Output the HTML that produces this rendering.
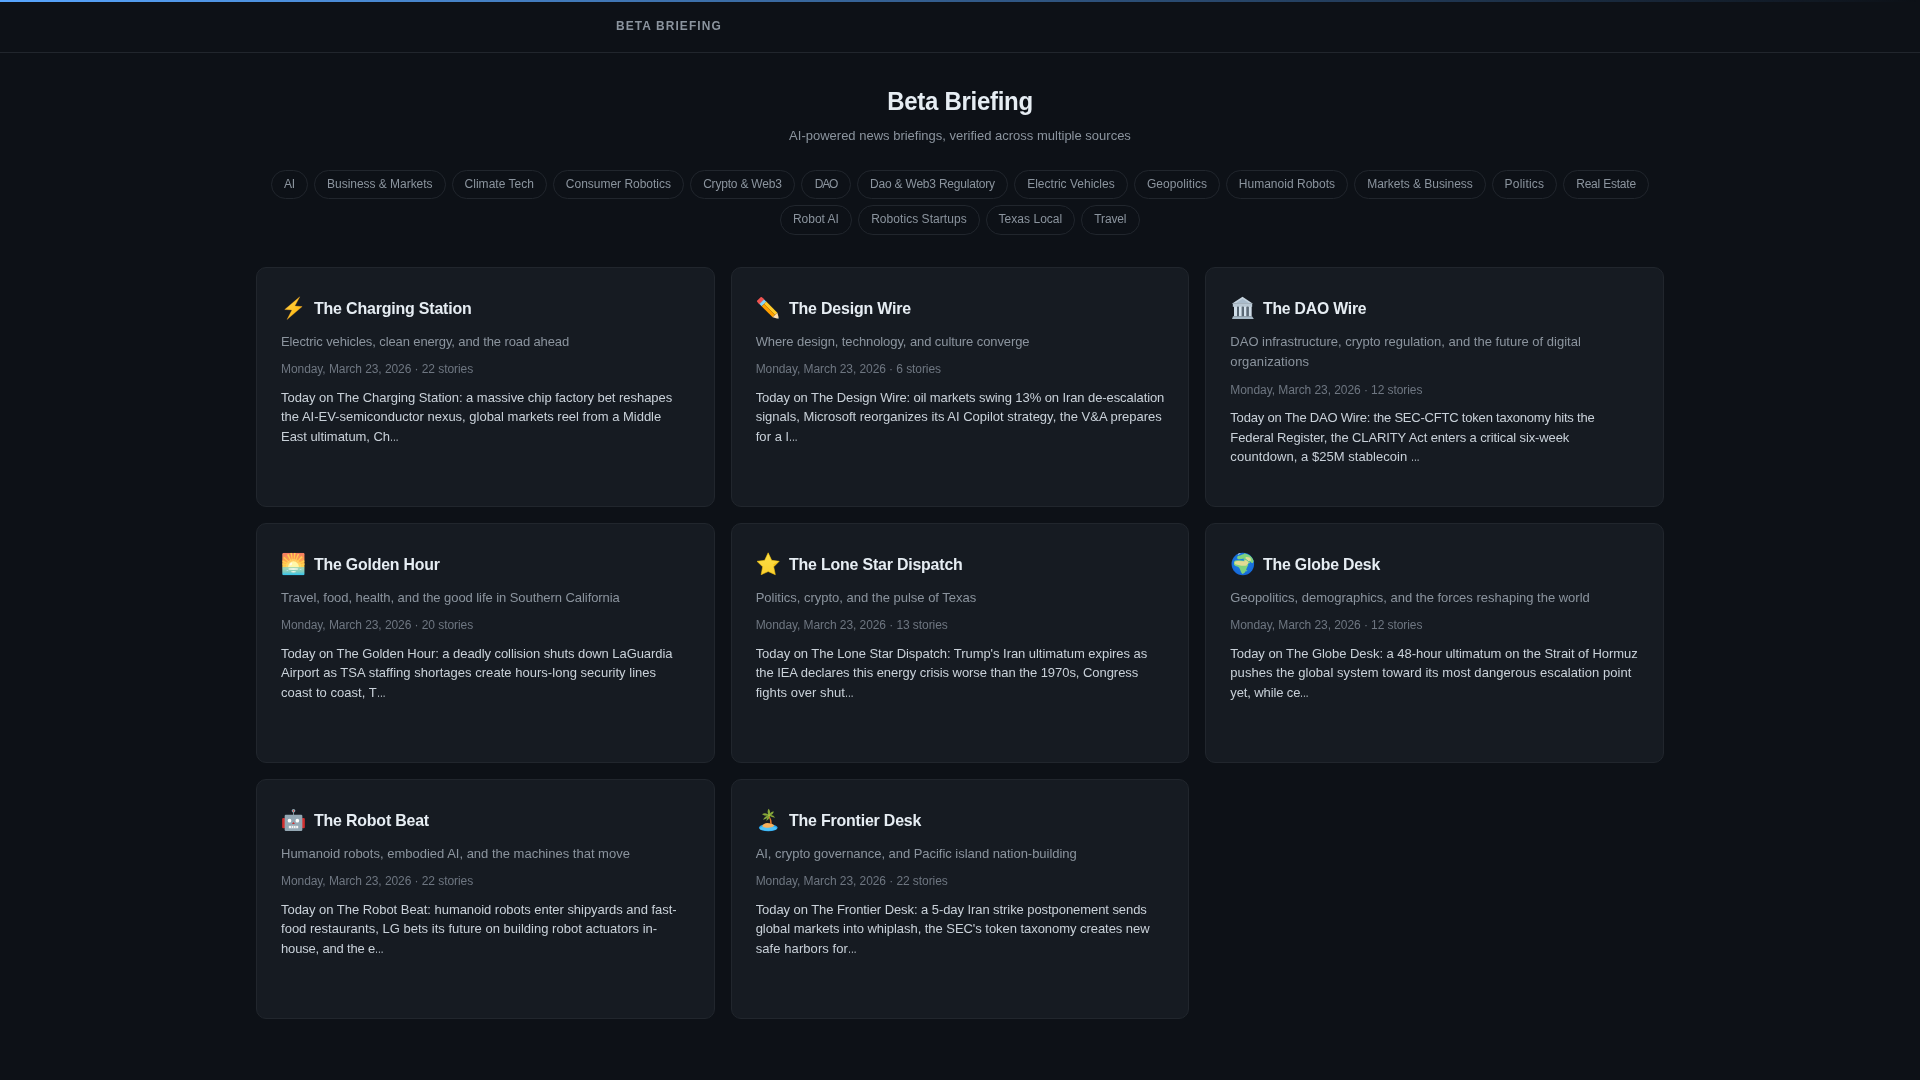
<!DOCTYPE html>
<html><head><meta charset="utf-8"><title>Beta Briefing</title>
<style>
*{box-sizing:border-box;margin:0;padding:0}
html,body{width:1920px;height:1080px;overflow:hidden;background:#0d1117}
body{position:relative;font-family:"Liberation Sans",sans-serif;color:#e6edf3}
.wrap{position:absolute;left:0;top:0;width:1920px;height:1080px;will-change:transform}
.topbar{position:absolute;left:0;top:0;width:1920px;height:2px;background:linear-gradient(90deg,#58a6ff 0%,rgba(88,166,255,0.5) 50%,rgba(88,166,255,0) 100%)}
.hdr{position:absolute;left:0;top:2px;width:1920px;height:51px;border-bottom:1px solid #21262d}
.brand{position:absolute;left:616px;top:15px;font-size:13px;line-height:18px;font-weight:700;letter-spacing:1.2px;color:#8b949e;white-space:nowrap;transform:scaleX(0.918);transform-origin:0 0}
.h1{position:absolute;left:0;width:1920px;text-align:center;font-size:25.5px;line-height:30px;font-weight:700;color:#e6edf3;white-space:nowrap;letter-spacing:-0.3px;transform:scaleX(0.94);transform-origin:960px 0}
.sub{position:absolute;left:0;width:1920px;text-align:center;font-size:13px;line-height:19.5px;color:#8b949e;white-space:nowrap}
.pill{position:absolute;height:29.5px;border:1px solid #21262d;border-radius:15px;font-size:12px;line-height:27px;text-align:center;color:#8b949e;white-space:nowrap}
.card{position:absolute;width:458.667px;height:240px;background:#161b22;border:1px solid #21262d;border-radius:10px}
.ic{position:absolute;top:22px;width:36px;height:36px}
.ttl{position:absolute;left:57.1px;transform-origin:0 0;font-size:16.6px;line-height:24px;font-weight:700;color:#e6edf3;white-space:nowrap}
.desc{position:absolute;left:24px;font-size:13px;line-height:19.5px;color:#8b949e;white-space:nowrap}
.date{position:absolute;left:24px;font-size:12px;line-height:18px;color:#6e7681;white-space:nowrap}
.sum{position:absolute;left:24px;font-size:13px;line-height:19.5px;color:#c9d1d9;white-space:nowrap}
.el{display:inline-block;letter-spacing:0;transform:scaleX(0.669);transform-origin:0 0}
</style></head><body><div class="wrap">
<div class="topbar"></div>
<div class="hdr"><div class="brand">BETA BRIEFING</div></div>
<div class="h1" style="top:86.4px">Beta Briefing</div>
<div class="sub" style="top:126px">AI-powered news briefings, verified across multiple sources</div>
<div class="pill" style="left:270.8px;top:169.75px;width:37.2px;letter-spacing:-0.25px">AI</div><div class="pill" style="left:313.6px;top:169.75px;width:132.4px;letter-spacing:-0.031px">Business &amp; Markets</div><div class="pill" style="left:451.8px;top:169.75px;width:95.0px;letter-spacing:0.038px">Climate Tech</div><div class="pill" style="left:552.9px;top:169.75px;width:131.0px;letter-spacing:-0.013px">Consumer Robotics</div><div class="pill" style="left:689.9px;top:169.75px;width:105.1px;letter-spacing:-0.198px">Crypto &amp; Web3</div><div class="pill" style="left:801.1px;top:169.75px;width:49.8px;letter-spacing:-1.117px">DAO</div><div class="pill" style="left:856.8px;top:169.75px;width:151.3px;letter-spacing:-0.209px">Dao &amp; Web3 Regulatory</div><div class="pill" style="left:1014.0px;top:169.75px;width:113.9px;letter-spacing:0.014px">Electric Vehicles</div><div class="pill" style="left:1134.1px;top:169.75px;width:85.9px;letter-spacing:0.075px">Geopolitics</div><div class="pill" style="left:1226.0px;top:169.75px;width:121.9px;letter-spacing:0.018px">Humanoid Robots</div><div class="pill" style="left:1354.0px;top:169.75px;width:132.0px;letter-spacing:-0.031px">Markets &amp; Business</div><div class="pill" style="left:1492.0px;top:169.75px;width:64.9px;letter-spacing:0.212px">Politics</div><div class="pill" style="left:1563.0px;top:169.75px;width:86.1px;letter-spacing:-0.211px">Real Estate</div><div class="pill" style="left:779.9px;top:205.25px;width:72.0px;letter-spacing:-0.029px">Robot AI</div><div class="pill" style="left:858.1px;top:205.25px;width:121.7px;letter-spacing:0.051px">Robotics Startups</div><div class="pill" style="left:985.7px;top:205.25px;width:89.5px;letter-spacing:0.027px">Texas Local</div><div class="pill" style="left:1080.7px;top:205.25px;width:59.2px;letter-spacing:-0.178px">Travel</div>
<div class="card" style="left:256.000px;top:267px"><svg class="ic" style="left:19px" viewBox="0 0 1080 1080"><defs><linearGradient id="gb" x1="0" y1="0" x2="1" y2="1"><stop offset="0" stop-color="#FFD54F"/><stop offset="1" stop-color="#FFB300"/></linearGradient></defs>
<path d="M712 205 L262 585 L478 598 L332 885 L785 498 L565 482 Z" fill="url(#gb)" stroke="#F9A825" stroke-width="10" stroke-linejoin="round"/></svg><div class="ttl" style="top:29.1px;letter-spacing:-0.2px;transform:scaleX(0.9622)">The Charging Station</div><div class="desc" style="top:63.65px;letter-spacing:-0.114px">Electric vehicles, clean energy, and the road ahead</div><div class="date" style="top:91.54px;letter-spacing:-0.071px">Monday, March 23, 2026 · 22 stories</div><div class="sum" style="top:119.65px;letter-spacing:-0.036px">Today on The Charging Station: a massive chip factory bet reshapes</div><div class="sum" style="top:139.15px;letter-spacing:-0.009px">the AI-EV-semiconductor nexus, global markets reel from a Middle</div><div class="sum" style="top:158.65px;letter-spacing:-0.043px">East ultimatum, Ch<span class="el">…</span></div></div>
<div class="card" style="left:730.667px;top:267px"><svg class="ic" style="left:18.333px" viewBox="0 0 1080 1080"><g transform="translate(268,268) rotate(45)">
<rect x="0" y="-100" width="125" height="200" rx="30" fill="#EF5350"/>
<rect x="60" y="-100" width="70" height="200" fill="#EF5350"/>
<rect x="120" y="-100" width="95" height="200" fill="#81D4FA"/>
<rect x="212" y="-100" width="470" height="100" fill="#FFCA28"/>
<rect x="212" y="0" width="470" height="100" fill="#FFA000"/>
<path d="M682 -100 L820 -22 L820 22 L682 100 Z" fill="#FFE0B2"/>
<path d="M805 -30 L860 0 L805 30 Z" fill="#546E7A"/>
</g></svg><div class="ttl" style="top:29.1px;letter-spacing:-0.2px;transform:scaleX(0.9604)">The Design Wire</div><div class="desc" style="top:63.65px;letter-spacing:-0.09px">Where design, technology, and culture converge</div><div class="date" style="top:91.54px;letter-spacing:-0.076px">Monday, March 23, 2026 · 6 stories</div><div class="sum" style="top:119.65px;letter-spacing:-0.086px">Today on The Design Wire: oil markets swing 13% on Iran de-escalation</div><div class="sum" style="top:139.15px;letter-spacing:0.005px">signals, Microsoft reorganizes its AI Copilot strategy, the V&amp;A prepares</div><div class="sum" style="top:158.65px;letter-spacing:0.086px">for a l<span class="el">…</span></div></div>
<div class="card" style="left:1205.333px;top:267px"><svg class="ic" style="left:17.667px" viewBox="0 0 1080 1080"><g fill="#B0BEC5">
<path d="M555 205 L870 410 L235 410 Z" fill="#C5D3DE"/>
<path d="M555 265 L760 395 L350 395 Z" fill="#A9BBCB"/>
<rect x="265" y="410" width="580" height="95" fill="#B8C7D3"/>
<rect x="300" y="490" width="95" height="300" fill="#CFDDE8"/>
<rect x="445" y="490" width="90" height="300" fill="#D5E3EE"/>
<rect x="590" y="490" width="90" height="300" fill="#D5E3EE"/>
<rect x="735" y="490" width="95" height="300" fill="#CFDDE8"/>
<rect x="395" y="505" width="50" height="280" fill="#5B6B78"/>
<rect x="535" y="505" width="55" height="280" fill="#5B6B78"/>
<rect x="680" y="505" width="55" height="280" fill="#5B6B78"/>
<path d="M270 790 L840 790 L895 870 L240 870 Z" fill="#A7B9C6"/>
</g></svg><div class="ttl" style="top:29.1px;letter-spacing:-0.2px;transform:scaleX(0.9489)">The DAO Wire</div><div class="desc" style="top:63.65px;letter-spacing:-0.0px">DAO infrastructure, crypto regulation, and the future of digital</div><div class="desc" style="top:84.15px;letter-spacing:0.111px">organizations</div><div class="date" style="top:113.04px;letter-spacing:-0.071px">Monday, March 23, 2026 · 12 stories</div><div class="sum" style="top:140.15px;letter-spacing:-0.204px">Today on The DAO Wire: the SEC-CFTC token taxonomy hits the</div><div class="sum" style="top:159.65px;letter-spacing:-0.116px">Federal Register, the CLARITY Act enters a critical six-week</div><div class="sum" style="top:179.15px;letter-spacing:0.05px">countdown, a $25M stablecoin <span class="el">…</span></div></div>
<div class="card" style="left:256.000px;top:523px"><svg class="ic" style="left:19px" viewBox="0 0 1080 1080"><defs>
<linearGradient id="gs1" x1="0" y1="0" x2="0" y2="1"><stop offset="0" stop-color="#F57A62"/><stop offset="0.6" stop-color="#FFA64D"/><stop offset="1" stop-color="#FFD54F"/></linearGradient>
<linearGradient id="gs2" x1="0" y1="0" x2="0" y2="1"><stop offset="0" stop-color="#A8D8B0"/><stop offset="0.55" stop-color="#7FCBBE"/><stop offset="1" stop-color="#29C5F6"/></linearGradient>
<clipPath id="cs"><rect x="185" y="205" width="675" height="670" rx="45"/></clipPath>
</defs>
<g clip-path="url(#cs)">
<rect x="185" y="205" width="675" height="430" fill="url(#gs1)"/>
<g fill="#FFD54F" opacity="0.9">
<path d="M520 600 L430 210 L480 205 Z"/><path d="M520 600 L540 205 L590 210 Z"/>
<path d="M520 600 L330 260 L380 240 Z"/><path d="M520 600 L650 230 L700 250 Z"/>
<path d="M520 600 L220 360 L250 320 Z"/><path d="M520 600 L760 300 L800 340 Z"/>
<path d="M520 600 L190 480 L200 430 Z"/><path d="M520 600 L840 420 L860 470 Z"/>
<path d="M520 600 L190 560 L195 520 Z"/><path d="M520 600 L860 520 L860 570 Z"/>
</g>
<circle cx="525" cy="620" r="230" fill="#FFE27A" opacity="0.45"/>
<circle cx="525" cy="620" r="160" fill="#FFF6A8"/>
<ellipse cx="450" cy="540" rx="30" ry="45" fill="#FFFFFF" opacity="0.7" transform="rotate(30 450 540)"/>
<rect x="185" y="632" width="675" height="250" fill="url(#gs2)"/>
<ellipse cx="520" cy="690" rx="150" ry="28" fill="#F1F8E9" opacity="0.9"/>
<ellipse cx="525" cy="770" rx="75" ry="22" fill="#F1F8E9" opacity="0.9"/>
<ellipse cx="735" cy="705" rx="40" ry="12" fill="#B3E5FC"/>
<ellipse cx="340" cy="735" rx="35" ry="12" fill="#B3E5FC"/>
</g></svg><div class="ttl" style="top:29.1px;letter-spacing:-0.2px;transform:scaleX(0.9554)">The Golden Hour</div><div class="desc" style="top:63.65px;letter-spacing:-0.065px">Travel, food, health, and the good life in Southern California</div><div class="date" style="top:91.54px;letter-spacing:-0.071px">Monday, March 23, 2026 · 20 stories</div><div class="sum" style="top:119.65px;letter-spacing:-0.067px">Today on The Golden Hour: a deadly collision shuts down LaGuardia</div><div class="sum" style="top:139.15px;letter-spacing:0.031px">Airport as TSA staffing shortages create hours-long security lines</div><div class="sum" style="top:158.65px;letter-spacing:0.04px">coast to coast, T<span class="el">…</span></div></div>
<div class="card" style="left:730.667px;top:523px"><svg class="ic" style="left:18.333px" viewBox="0 0 1080 1080"><defs><linearGradient id="gst" x1="0" y1="0" x2="0" y2="1"><stop offset="0" stop-color="#FDE047"/><stop offset="1" stop-color="#FBD02F"/></linearGradient></defs>
<path d="M545 205 L650 430 L875 460 L710 625 L760 860 L545 765 L335 860 L380 625 L210 460 L440 430 Z" fill="url(#gst)" stroke="#F4C20D" stroke-width="18" stroke-linejoin="round"/>
<path d="M690 560 L820 480 L730 600 Z" fill="#F5B800" opacity="0.7"/></svg><div class="ttl" style="top:29.1px;letter-spacing:-0.2px;transform:scaleX(0.9594)">The Lone Star Dispatch</div><div class="desc" style="top:63.65px;letter-spacing:-0.007px">Politics, crypto, and the pulse of Texas</div><div class="date" style="top:91.54px;letter-spacing:-0.071px">Monday, March 23, 2026 · 13 stories</div><div class="sum" style="top:119.65px;letter-spacing:-0.048px">Today on The Lone Star Dispatch: Trump's Iran ultimatum expires as</div><div class="sum" style="top:139.15px;letter-spacing:-0.05px">the IEA declares this energy crisis worse than the 1970s, Congress</div><div class="sum" style="top:158.65px;letter-spacing:0.07px">fights over shut<span class="el">…</span></div></div>
<div class="card" style="left:1205.333px;top:523px"><svg class="ic" style="left:17.667px" viewBox="0 0 1080 1080"><defs><radialGradient id="gg" cx="0.5" cy="0.45" r="0.6"><stop offset="0" stop-color="#1E88E5"/><stop offset="1" stop-color="#1565D8"/></radialGradient>
<clipPath id="cg"><circle cx="565" cy="540" r="338"/></clipPath></defs>
<circle cx="565" cy="540" r="338" fill="url(#gg)"/>
<g clip-path="url(#cg)">
<path d="M610 215 Q700 230 790 290 Q880 370 900 440 L860 520 Q820 500 790 470 Q760 450 730 455 Q700 420 660 400 Q620 395 600 385 Q540 375 480 395 Q440 405 400 380 Q380 320 420 290 Q470 300 500 280 Q540 250 600 240 Z" fill="#7FD37E"/>
<path d="M300 470 Q330 430 400 430 Q460 425 470 430 Q540 440 600 440 Q640 455 660 470 Q700 480 720 520 Q740 590 700 620 Q670 680 650 760 Q610 840 550 840 Q500 780 480 700 Q460 640 420 625 Q330 600 300 560 Z" fill="#7FD37E"/>
<path d="M320 480 Q360 445 430 450 Q520 455 600 455 Q650 470 690 510 Q700 560 670 590 Q600 600 520 590 Q420 570 340 545 Q310 520 320 480 Z" fill="#E2DA94"/>
<path d="M650 330 Q720 320 790 350 Q820 400 800 450 Q760 440 730 455 Q700 420 660 400 Q640 370 650 330 Z" fill="#E2DA94"/>
<path d="M590 390 L660 400 Q700 420 730 455 L790 470 L770 520 L720 525 Q690 490 660 470 L600 445 Z" fill="#7FD37E"/>
<path d="M620 420 Q680 430 730 470 Q740 510 720 540 Q690 560 660 540 Q640 500 610 470 Z" fill="#E2DA94"/>
<path d="M410 225 Q460 205 500 210 Q480 250 420 265 Z" fill="#FFFFFF" opacity="0.85"/>
<path d="M670 720 Q690 700 700 730 Q690 770 670 760 Z" fill="#7FD37E"/>
</g></svg><div class="ttl" style="top:29.1px;letter-spacing:-0.2px;transform:scaleX(0.9550)">The Globe Desk</div><div class="desc" style="top:63.65px;letter-spacing:-0.007px">Geopolitics, demographics, and the forces reshaping the world</div><div class="date" style="top:91.54px;letter-spacing:-0.071px">Monday, March 23, 2026 · 12 stories</div><div class="sum" style="top:119.65px;letter-spacing:-0.042px">Today on The Globe Desk: a 48-hour ultimatum on the Strait of Hormuz</div><div class="sum" style="top:139.15px;letter-spacing:0.066px">pushes the global system toward its most dangerous escalation point</div><div class="sum" style="top:158.65px;letter-spacing:-0.122px">yet, while ce<span class="el">…</span></div></div>
<div class="card" style="left:256.000px;top:779px"><svg class="ic" style="left:19px" viewBox="0 0 1080 1080"><rect x="185" y="480" width="90" height="310" rx="30" fill="#D32F2F"/>
<rect x="775" y="480" width="90" height="310" rx="30" fill="#D32F2F"/>
<rect x="513" y="290" width="24" height="110" fill="#90A4AE"/>
<circle cx="525" cy="265" r="55" fill="#90A4AE"/>
<rect x="512" y="240" width="26" height="55" rx="10" fill="#E53935"/>
<rect x="260" y="385" width="530" height="485" rx="35" fill="#93A7B3"/>
<circle cx="405" cy="560" r="55" fill="#FFFFFF"/>
<circle cx="640" cy="560" r="55" fill="#FFFFFF"/>
<path d="M522 600 L568 660 L478 660 Z" fill="#D32F2F"/>
<rect x="385" y="715" width="280" height="72" fill="#F5F5F5"/>
<rect x="450" y="715" width="22" height="72" fill="#A8B5BD"/>
<rect x="515" y="715" width="22" height="72" fill="#A8B5BD"/>
<rect x="585" y="715" width="22" height="72" fill="#A8B5BD"/></svg><div class="ttl" style="top:29.1px;letter-spacing:-0.2px;transform:scaleX(0.9596)">The Robot Beat</div><div class="desc" style="top:63.65px;letter-spacing:-0.003px">Humanoid robots, embodied AI, and the machines that move</div><div class="date" style="top:91.54px;letter-spacing:-0.071px">Monday, March 23, 2026 · 22 stories</div><div class="sum" style="top:119.65px;letter-spacing:-0.037px">Today on The Robot Beat: humanoid robots enter shipyards and fast-</div><div class="sum" style="top:139.15px;letter-spacing:0.017px">food restaurants, LG bets its future on building robot actuators in-</div><div class="sum" style="top:158.65px;letter-spacing:-0.167px">house, and the e<span class="el">…</span></div></div>
<div class="card" style="left:730.667px;top:779px"><svg class="ic" style="left:18.333px" viewBox="0 0 1080 1080"><ellipse cx="548" cy="772" rx="282" ry="105" fill="#2AA8F2"/>
<ellipse cx="548" cy="792" rx="255" ry="72" fill="#4FC3F7"/>
<path d="M365 720 Q400 640 520 630 Q660 630 730 700 Q700 770 540 775 Q400 770 365 720 Z" fill="#F6B15C"/>
<path d="M585 420 Q650 520 655 650 L605 660 Q610 530 555 430 Z" fill="#E0782A"/>
<g fill="#87A83A">
<path d="M560 400 Q500 300 555 205 Q620 260 600 395 Z"/>
<path d="M570 395 Q620 280 715 285 Q700 370 585 410 Z"/>
<path d="M575 395 Q700 360 755 470 Q660 470 575 415 Z"/>
<path d="M565 385 Q460 300 360 370 Q450 430 565 410 Z"/>
<path d="M565 400 Q450 420 390 530 Q500 530 575 415 Z"/>
<path d="M570 405 Q500 470 490 570 Q580 520 595 420 Z"/>
</g>
<circle cx="572" cy="400" r="34" fill="#A5C23A"/></svg><div class="ttl" style="top:29.1px;letter-spacing:-0.2px;transform:scaleX(0.9599)">The Frontier Desk</div><div class="desc" style="top:63.65px;letter-spacing:-0.035px">AI, crypto governance, and Pacific island nation-building</div><div class="date" style="top:91.54px;letter-spacing:-0.071px">Monday, March 23, 2026 · 22 stories</div><div class="sum" style="top:119.65px;letter-spacing:-0.071px">Today on The Frontier Desk: a 5-day Iran strike postponement sends</div><div class="sum" style="top:139.15px;letter-spacing:-0.047px">global markets into whiplash, the SEC's token taxonomy creates new</div><div class="sum" style="top:158.65px;letter-spacing:0.083px">safe harbors for<span class="el">…</span></div></div>
</div></body></html>
